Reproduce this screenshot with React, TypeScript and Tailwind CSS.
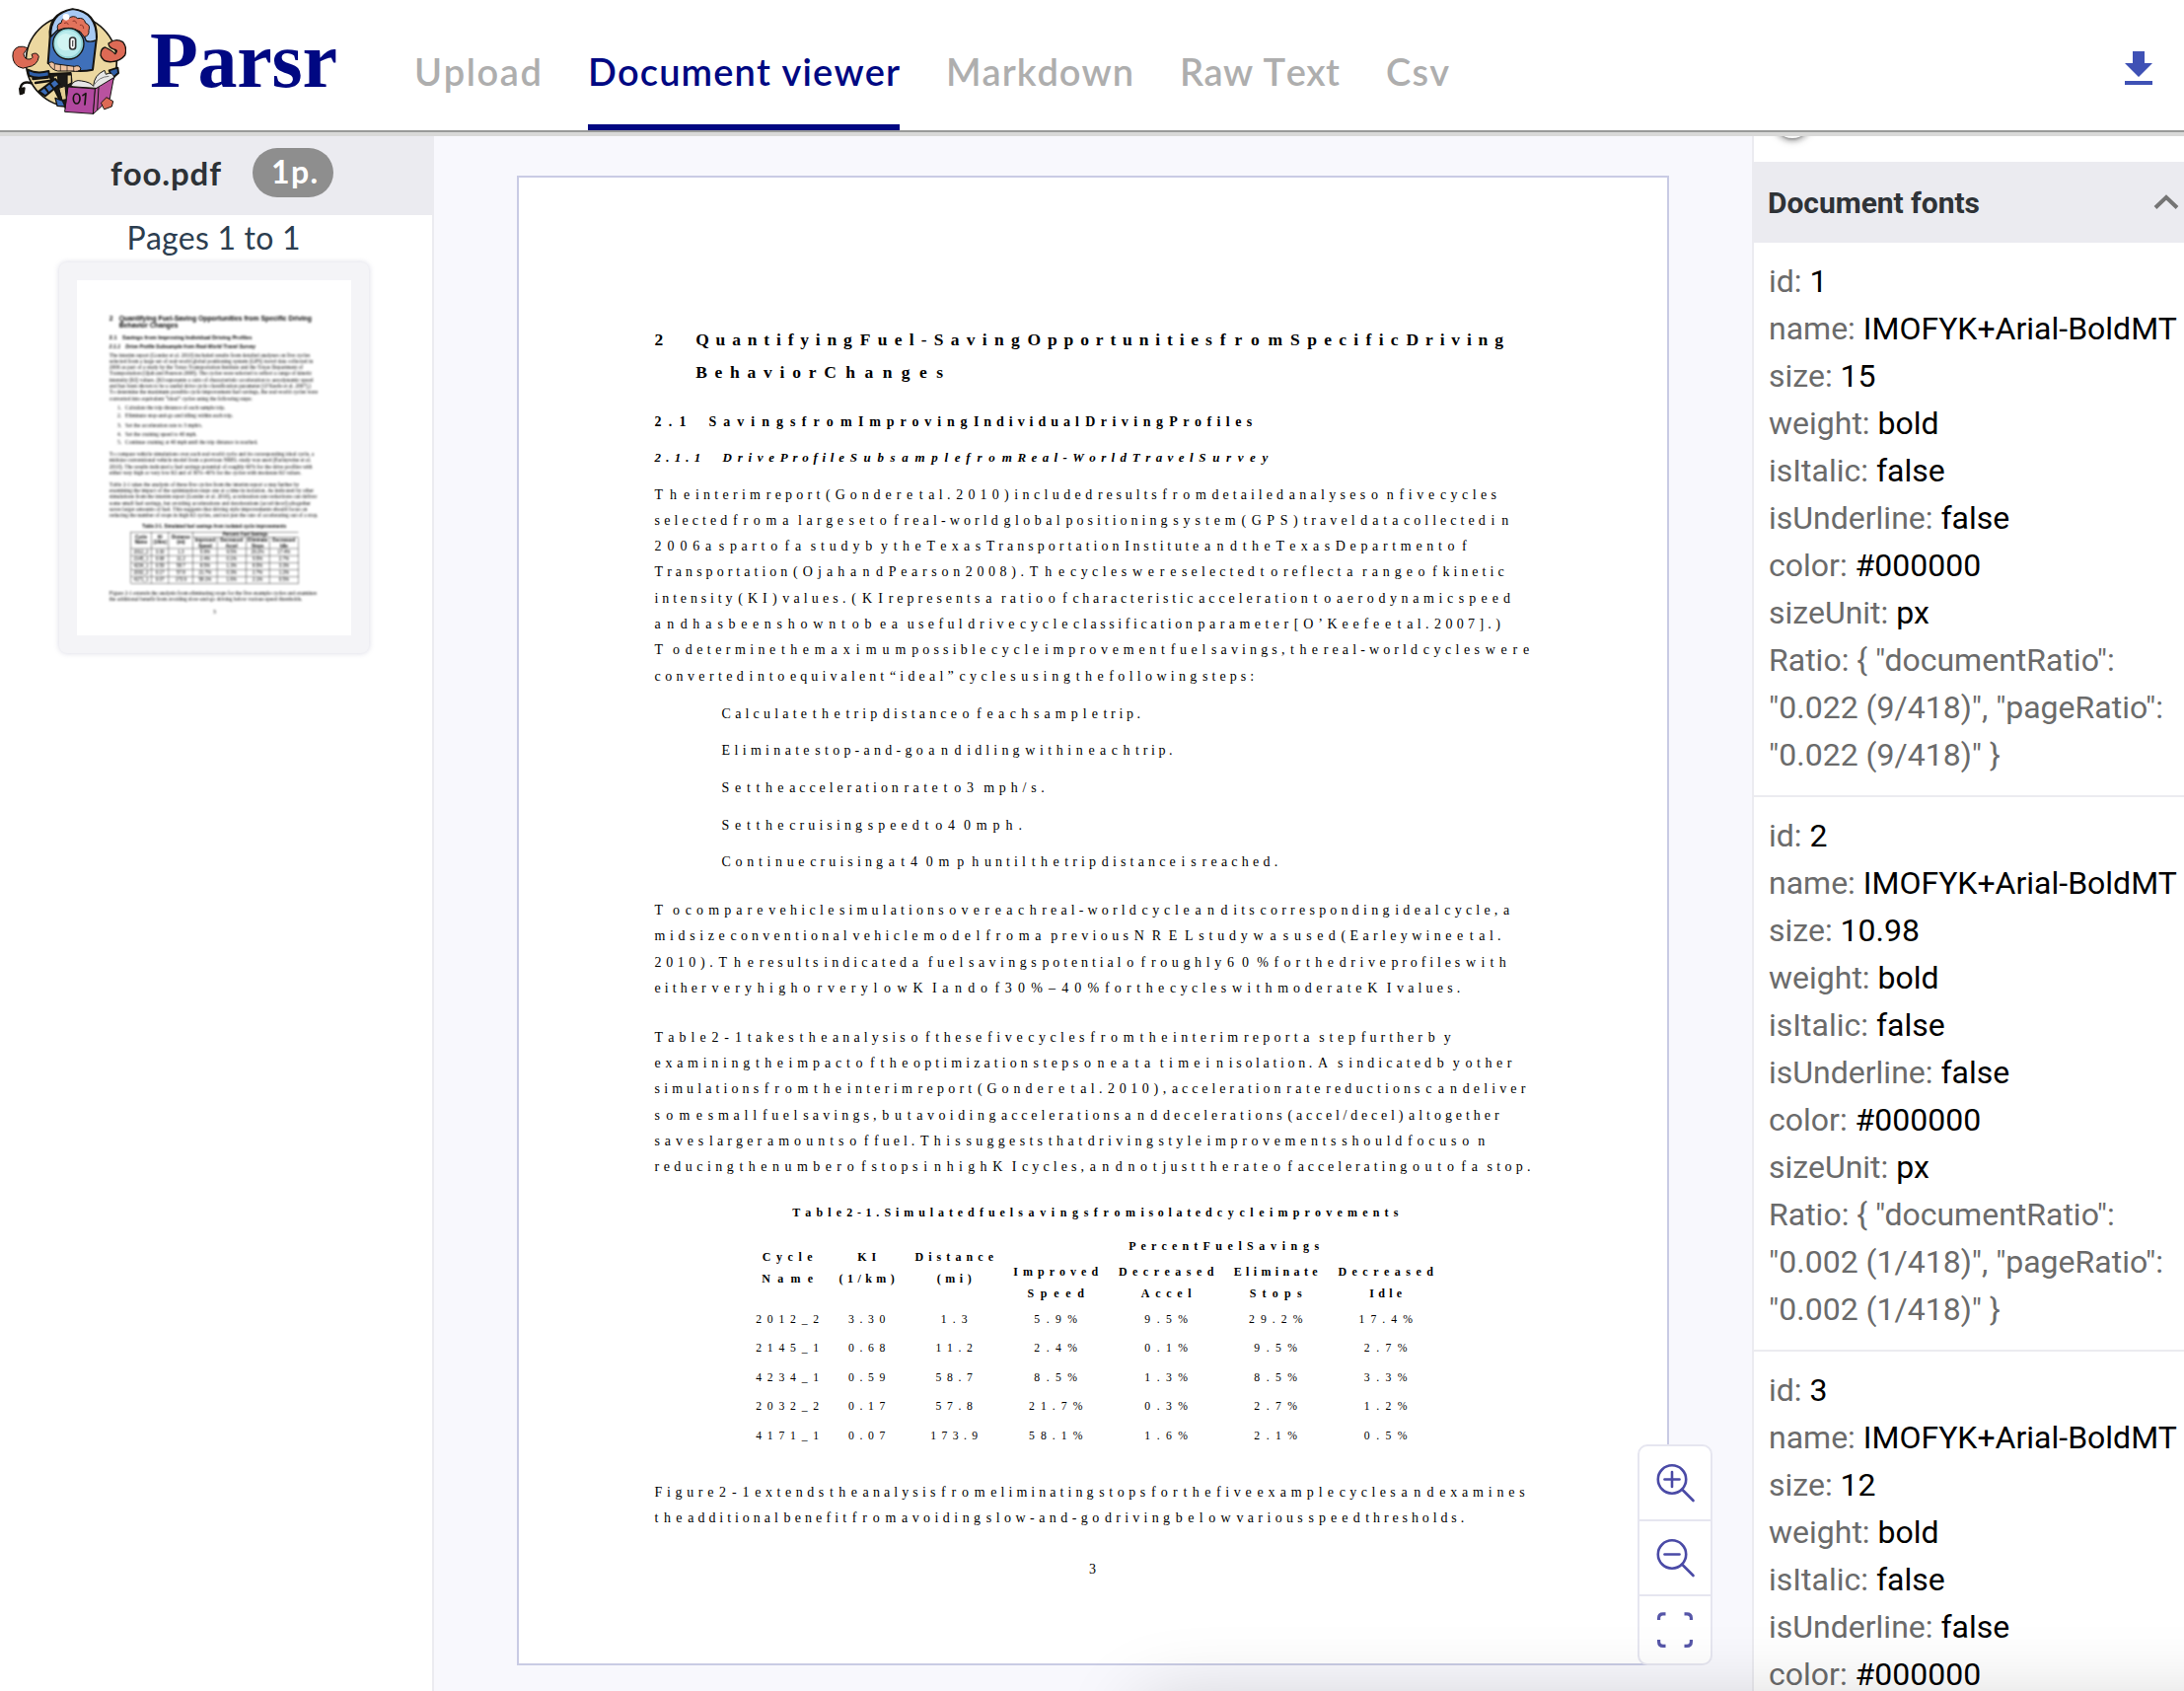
import React from "react";
import { clsx } from "clsx";

const SERIF = "'Liberation Serif'";
const SANS = "'Liberation Sans'";

const canvas = document.createElement("canvas");
const ctx = canvas.getContext("2d")!;
const cache = new Map<string, number>();

function measure(text: string, font: string): number {
  const key = font + "|" + text;
  const known = cache.get(key);
  if (known !== undefined) return known;
  ctx.font = font;
  ctx.fontKerning = "none";
  const w = ctx.measureText(text).width;
  cache.set(key, w);
  return w;
}

/* ---------- Text whose tracking is computed so that it fills a width ---------- */

function Fit({ text, width, font, className }: { text: string; width: number; font: string; className?: string }) {
  const spacing = (width - measure(text, font)) / Math.max(1, text.length - 1);
  return (
    <span
      className={clsx("inline-block whitespace-nowrap [font-kerning:none]", className)}
      style={{ width, letterSpacing: spacing }}
    >
      {text}
    </span>
  );
}

/* ---------- Document text ---------- */

type Kind = "h1" | "h2" | "h3" | "body" | "th" | "td";

const kinds: Record<Kind, { pre: string; size: number; source: string; shown: number; cls: string; plain: string }> = {
  h1: { pre: "bold ", size: 28.57, source: SANS, shown: 17.5, cls: "font-bold text-[17.5px]", plain: "font-bold text-[28.5px] font-['Liberation_Sans']" },
  h2: { pre: "bold ", size: 22.9, source: SANS, shown: 14, cls: "font-bold text-[14px]", plain: "font-bold text-[22.9px] font-['Liberation_Sans']" },
  h3: { pre: "italic bold ", size: 20.95, source: SANS, shown: 13, cls: "font-bold italic text-[13px]", plain: "font-bold italic text-[20.9px] font-['Liberation_Sans']" },
  body: { pre: "", size: 22.9, source: SERIF, shown: 14, cls: "text-[14px]", plain: "text-[22.85px]" },
  th: { pre: "bold ", size: 19.1, source: SANS, shown: 12, cls: "font-bold text-[12px]", plain: "font-bold text-[19px] font-['Liberation_Sans']" },
  td: { pre: "", size: 19.2, source: SANS, shown: 11.7, cls: "text-[11.7px]", plain: "text-[19px] font-['Liberation_Sans']" },
};

const Plain = React.createContext(false);

function Words({ kind, text, className }: { kind: Kind; text: string; className?: string }) {
  const plain = React.useContext(Plain);
  const k = kinds[kind];
  const source = `${k.pre}${k.size}px ${k.source}`;
  const shown = `${k.pre}${k.shown}px ${SERIF}`;
  if (plain) {
    return <div className={clsx("whitespace-nowrap [font-kerning:none]", k.plain, className)}>{text}</div>;
  }
  return (
    <div
      className={clsx("flex whitespace-nowrap [font-kerning:none]", k.cls, className)}
      style={{ columnGap: measure(" ", source) }}
    >
      {text.split(" ").map((word, i) => {
        const width = measure(word, source);
        const spacing = word.length > 1 ? (width - measure(word, shown)) / (word.length - 1) : 0;
        return (
          <span key={i} className="block shrink-0" style={{ width, letterSpacing: spacing }}>
            {word}
          </span>
        );
      })}
    </div>
  );
}

function Paragraph({ lines, className }: { lines: string[]; className: string }) {
  return (
    <div className={clsx("leading-[26.3px]", className)}>
      {lines.map((l) => (
        <Words key={l} kind="body" text={l} className="h-[26.3px]" />
      ))}
    </div>
  );
}

const p1 = [
  "The interim report (Gonder et al. 2010) included results from detailed analyses on five cycles",
  "selected from a large set of real-world global positioning system (GPS) travel data collected in",
  "2006 as part of a study by the Texas Transportation Institute and the Texas Department of",
  "Transportation (Ojah and Pearson 2008). The cycles were selected to reflect a range of kinetic",
  "intensity (KI) values. (KI represents a ratio of characteristic acceleration to aerodynamic speed",
  "and has been shown to be a useful drive cycle classification parameter [O’Keefe et al. 2007].)",
  "To determine the maximum possible cycle improvement fuel savings, the real-world cycles were",
  "converted into equivalent “ideal” cycles using the following steps:",
];
const steps = [
  "Calculate the trip distance of each sample trip.",
  "Eliminate stop-and-go and idling within each trip.",
  "Set the acceleration rate to 3 mph/s.",
  "Set the cruising speed to 40 mph.",
  "Continue cruising at 40 mph until the trip distance is reached.",
];
const p2 = [
  "To compare vehicle simulations over each real-world cycle and its corresponding ideal cycle, a",
  "midsize conventional vehicle model from a previous NREL study was used (Earleywine et al.",
  "2010). The results indicated a fuel savings potential of roughly 60% for the drive profiles with",
  "either very high or very low KI and of 30%–40% for the cycles with moderate KI values.",
];
const p3 = [
  "Table 2-1 takes the analysis of these five cycles from the interim report a step further by",
  "examining the impact of the optimization steps one at a time in isolation. As indicated by other",
  "simulations from the interim report (Gonder et al. 2010), acceleration rate reductions can deliver",
  "some small fuel savings, but avoiding accelerations and decelerations (accel/decel) altogether",
  "saves larger amounts of fuel. This suggests that driving style improvements should focus on",
  "reducing the number of stops in high KI cycles, and not just the rate of accelerating out of a stop.",
];
const p4 = [
  "Figure 2-1 extends the analysis from eliminating stops for the five example cycles and examines",
  "the additional benefit from avoiding slow-and-go driving below various speed thresholds.",
];
const rows = [
  ["2012_2", "3.30", "1.3", "5.9%", "9.5%", "29.2%", "17.4%"],
  ["2145_1", "0.68", "11.2", "2.4%", "0.1%", "9.5%", "2.7%"],
  ["4234_1", "0.59", "58.7", "8.5%", "1.3%", "8.5%", "3.3%"],
  ["2032_2", "0.17", "57.8", "21.7%", "0.3%", "2.7%", "1.2%"],
  ["4171_1", "0.07", "173.9", "58.1%", "1.6%", "2.1%", "0.5%"],
];

function DocumentTable() {
  const plain = React.useContext(Plain);
  const edge = plain ? "border-[#222]" : "border-transparent";
  const left = [["Cycle", "Name"], ["KI", "(1/km)"], ["Distance", "(mi)"]];
  const right = [["Improved", "Speed"], ["Decreased", "Accel"], ["Eliminate", "Stops"], ["Decreased", "Idle"]];
  return (
    <div className={clsx("ml-[90.6px] mt-[11.4px] w-[712px] border-t-2 border-l-2", edge)}>
      <div className="-mt-[2px] -ml-[1px] grid h-[70.6px] grid-cols-[88px_73px_104px_447px] leading-[22px]">
        {left.map(([a, b]) => (
          <div key={a} className={clsx("flex flex-col items-center border-r-2 border-b-2 pt-[10.6px]", edge)}>
            <Words kind="th" text={a} className="h-[22px]" />
            <Words kind="th" text={b} />
          </div>
        ))}
        <div className={clsx("flex flex-col border-b-2", edge)}>
          <Words kind="th" text="Percent Fuel Savings" className="mr-[6px] h-[22px] self-center" />
          <div className={clsx("grid grow grid-cols-[102px_122px_100px_123px] border-t-2 pt-[2px]", edge)}>
            {right.map(([a, b]) => (
              <div key={b} className={clsx("flex flex-col items-center border-r-2", edge)}>
                <Words kind="th" text={a} className="h-[22px]" />
                <Words kind="th" text={b} className="h-[22px]" />
              </div>
            ))}
          </div>
        </div>
      </div>
      {rows.map((r) => (
        <div key={r[0]} className="-ml-[1px] grid h-[29.5px] grid-cols-[88px_73px_104px_102px_122px_100px_123px] leading-[29.5px]">
          {r.map((c, i) => (
            <div key={i} className={clsx("flex justify-center border-r-2", plain && "border-b-2", edge)}>
              <Words kind="td" text={c} />
            </div>
          ))}
        </div>
      ))}
    </div>
  );
}

function DocumentPage() {
  const plain = React.useContext(Plain);
  return (
    <div
      className={clsx(
        "flex h-[1506px] w-[1164px] flex-col bg-white pl-[137.6px] font-['Liberation_Serif',serif] text-black",
        plain ? "pt-[144px]" : "pt-[148px]",
      )}
    >
      <div className="flex leading-[33px]">
        <Words kind="h1" text="2" className="w-[41.6px]" />
        <div>
          <Words kind="h1" text="Quantifying Fuel-Saving Opportunities from Specific Driving" className="h-[33px]" />
          <Words kind="h1" text="Behavior Changes" className="h-[33px]" />
        </div>
      </div>
      <div className="mt-[20.4px] flex h-[28px] leading-[28px]">
        <Words kind="h2" text="2.1" className="w-[55px]" />
        <Words kind="h2" text="Savings from Improving Individual Driving Profiles" />
      </div>
      <div className="mt-[8px] flex h-[28px] leading-[28px]">
        <Words kind="h3" text="2.1.1" className="w-[69px]" />
        <Words kind="h3" text="Drive Profile Subsample from Real-World Travel Survey" />
      </div>
      <Paragraph lines={p1} className="mt-[10.2px]" />
      <div className="mt-[5.6px] leading-[37.7px]">
        {steps.map((s, i) => (
          <div key={s} className="flex h-[37.7px] pl-[34px]">
            <div className="w-[34px]">{plain && <Words kind="body" text={`${i + 1}.`} />}</div>
            <Words kind="body" text={s} />
          </div>
        ))}
      </div>
      <Paragraph lines={p2} className="mt-[17.2px]" />
      <Paragraph lines={p3} className="mt-[23.3px]" />
      <Words kind="th" text="Table 2-1. Simulated fuel savings from isolated cycle improvements" className="mt-[20.4px] ml-[139.6px] h-[24px] leading-[24px]" />
      <DocumentTable />
      <Paragraph lines={p4} className="mt-[29.6px]" />
      <div className="mt-[25.3px] flex h-[26.3px] w-[892px] justify-center leading-[26.3px]">
        <Words kind="body" text="3" />
      </div>
    </div>
  );
}

/* ---------- Logo ---------- */

function Robot() {
  return (
    <svg viewBox="36 24 348 324" className="h-[108px] w-[116px] shrink-0" stroke="#15130f" strokeWidth="6" strokeLinejoin="round" strokeLinecap="round">
      <circle cx="217" cy="186" r="138" fill="#ecd8a0" strokeWidth="5" />
      <path d="M96 253 Q66 244 62 268 L66 284" fill="none" strokeWidth="7" />
      <path d="M60 270 l14 -2 -2 14 -10 4z" fill="#15130f" />
      <path d="M150 225 L215 222 L222 300 L205 335 L180 300 L160 260z" fill="#1b1a18" />
      <path d="M163 232 l12 -2 2 20 -10 6z M205 228 l12 0 0 24 -12 6z M180 268 l18 -6 4 40 -12 2z" fill="#e3cd92" strokeWidth="3" />
      <path d="M84 212 Q112 226 148 216 L150 232 Q112 242 88 230z" fill="#2f5fa8" />
      <path d="M100 240 L146 236 M108 252 L150 246" fill="none" strokeWidth="7" />
      <path d="M118 278 L168 240 L182 256 L138 292z" fill="#3b6cb8" />
      <path d="M136 266 l12 16 M152 254 l12 16" fill="none" />
      <path d="M168 298 l22 8 8 18 -24 -2z" fill="#3b6cb8" strokeWidth="4" />
      <path d="M332 214 l26 -8 2 16 -18 16z" fill="#2f5fa8" />
      <path d="M152 112 Q146 42 220 28 Q294 36 294 112 L282 212 Q220 226 146 192z" fill="#3f70ba" />
      <path d="M155 112 Q152 40 222 28 Q296 38 293 122 Q276 130 262 124 L250 96 L174 92z" fill="#a7c9f3" strokeWidth="4" />
      <path d="M176 92 Q170 72 186 70 Q188 52 208 56 Q224 44 236 56 Q256 52 260 70 Q276 76 270 92 Q272 110 256 112 L244 96 Q210 76 176 92z" fill="#e2735c" strokeWidth="3" />
      <path d="M196 70 q8 -6 12 4 M222 64 q8 -4 10 6 M244 76 q10 -2 10 10" fill="none" stroke="#8d3427" strokeWidth="3" />
      <circle cx="201" cy="52" r="10" fill="#fff" stroke="none" />
      <circle cx="208" cy="133" r="47" fill="#8fd0d4" strokeWidth="4" />
      <circle cx="207" cy="132" r="40" fill="#b9ebec" stroke="none" />
      <circle cx="200" cy="128" r="26" fill="#d2f5f3" stroke="none" />
      <rect x="212" y="114" width="18" height="36" rx="8" fill="#fff" stroke="#333" strokeWidth="5" />
      <path d="M221 124 v16" stroke="#555" strokeWidth="4" />
      <path d="M148 192 Q158 184 166 194 L226 202 Q242 196 246 210 Q238 220 222 216 L176 216 Q154 212 148 192z" fill="#f0c3a1" strokeWidth="3" />
      <path d="M166 196 v14 M184 199 v16 M204 201 v15 M224 202 v14" strokeWidth="2" />
      <path d="M84 146 Q52 132 40 158 Q34 186 54 202 Q70 212 84 204 Q114 200 118 172 Q112 156 96 166 Q104 178 90 180 Q74 182 72 164 Q76 156 84 146z" fill="#dc6a55" strokeWidth="3" />
      <path d="M330 132 Q352 114 374 128 Q388 146 380 168 Q366 186 340 188 Q312 190 306 168 Q306 146 320 144 Q342 154 350 164 Q362 152 346 150 Q330 144 330 132z" fill="#dc6a55" strokeWidth="4" />
      <path d="M215 262 Q225 240 248 246 Q276 250 284 262 Q286 228 318 214 L322 226 Q342 216 348 236 L300 268z" fill="#e6e6e6" strokeWidth="3" />
      <path d="M286 258 Q300 234 330 232" fill="none" stroke="#777" strokeWidth="3" />
      <path d="M208 264 L290 270 L284 346 L198 340z" fill="#b1489f" strokeWidth="3" />
      <path d="M290 270 L346 236 L334 300 L284 346z" fill="#b9529f" strokeWidth="3" />
      <path d="M300 266 L296 334" fill="none" strokeWidth="3" />
      <ellipse cx="233" cy="300" rx="10" ry="15" fill="none" strokeWidth="5" />
      <path d="M252 290 l9 -6 -3 34" fill="none" strokeWidth="5" />
      <path d="M308 312 L324 296 L344 308 L340 324 L318 332z" fill="#dc6a55" strokeWidth="3" />
    </svg>
  );
}

/* ---------- Header ---------- */

const tabs = [
  { label: "Upload", width: 129, gap: "ml-0" },
  { label: "Document viewer", width: 316, active: true, gap: "ml-[47px]" },
  { label: "Markdown", width: 190, gap: "ml-[47px]" },
  { label: "Raw Text", width: 162, gap: "ml-[47px]" },
  { label: "Csv", width: 64, gap: "ml-[47px]" },
];

function Header() {
  return (
    <header className="flex h-[138px] shrink-0 border-b-4 border-[#d9d9d8] bg-white">
      <div className="flex h-[134px] w-full border-b-2 border-[#999a99]">
        <div className="flex w-[420px] pt-2 pl-3">
          <Robot />
          <div className="mt-[7px] ml-[24px] h-[92px] font-['Liberation_Serif',serif] text-[80px] leading-[92px] font-bold text-[#000882]">
            <Fit text="Parsr" width={190} font="bold 80px 'Liberation Serif'" />
          </div>
        </div>
        <nav className="flex font-['Lato',sans-serif] text-[38px] leading-[44px] font-semibold">
          {tabs.map((t) => (
            <div
              key={t.label}
              className={clsx(
                "h-[132px] border-b-[6px] pt-[50px]",
                t.gap,
                t.active ? "border-[#000882] text-[#000882]" : "border-transparent text-[#aeaeae]",
              )}
            >
              <Fit text={t.label} width={t.width} font="600 38px Lato" />
            </div>
          ))}
        </nav>
        <div className="ml-auto pt-[46px] pr-[22px]">
          <svg viewBox="0 0 24 24" className="size-12" fill="#3f51b5">
            <path d="M19 9h-4V3H9v6H5l7 7 7-7zM5 18v2h14v-2H5z" />
          </svg>
        </div>
      </div>
    </header>
  );
}

/* ---------- Left column ---------- */

function Sidebar() {
  return (
    <aside className="flex w-[440px] shrink-0 flex-col border-r-2 border-[#ebebf0] bg-white font-['Lato',sans-serif]">
      <div className="flex h-[80px] shrink-0 bg-[#ebebf0] pl-[112px]">
        <div className="mt-[17px] text-[33px] leading-[40px] font-bold text-[#2d3236]">
          <Fit text="foo.pdf" width={112} font="bold 33px Lato" />
        </div>
        <div className="mt-[12px] ml-[32px] h-[50px] w-[82px] rounded-full bg-[#8e8e8e] pl-[19px] text-[32px] leading-[47px] font-bold text-white">
          <Fit text="1p." width={47} font="bold 32px Lato" />
        </div>
      </div>
      <div className="h-[48px] shrink-0 pt-[4px] pl-[128.5px] text-[32px] leading-[38px] text-[#2c3e50]">
        <Fit text="Pages 1 to 1" width={176} font="32px Lato" />
      </div>
      <div className="ml-[60px] h-[396px] w-[314px] rounded-[8px] bg-[#f4f4f7] p-[18px] shadow-[0_0_5px_1px_rgba(120,120,160,0.22)]">
        <div className="h-[360px] w-[278px] overflow-hidden bg-white">
          <div className="h-[1506px] w-[1164px] origin-top-left scale-[0.2388] blur-[4px]">
            <Plain.Provider value={true}>
              <DocumentPage />
            </Plain.Provider>
          </div>
        </div>
      </div>
    </aside>
  );
}

/* ---------- Right column ---------- */

const fonts = [
  { id: "1", size: "15", ratio: "0.022 (9/418)" },
  { id: "2", size: "10.98", ratio: "0.002 (1/418)" },
  { id: "3", size: "12", ratio: "0.002 (1/418)" },
];

function FontsPanel() {
  return (
    <aside className="flex w-[438px] shrink-0 flex-col overflow-hidden border-l-2 border-[#ebebf0] bg-white font-['Roboto',sans-serif]">
      <div className="h-[26px] shrink-0 overflow-hidden pl-[19px]">
        <div className="-mt-[38px] size-10 rounded-full bg-[#fafafa] shadow-[0_6px_2px_-4px_rgba(0,0,0,0.2),0_4px_4px_rgba(0,0,0,0.14),0_2px_10px_rgba(0,0,0,0.2)]" />
      </div>
      <div className="flex h-[82px] shrink-0 items-center justify-between bg-[#ebebf0] pr-[5px] pl-[14px] text-[30px] font-bold text-[#2f3337]">
        <Fit text="Document fonts" width={215} font="bold 30px Roboto" />
        <svg viewBox="0 0 26 16" className="h-[16px] w-[26px]" fill="none" stroke="#757575" strokeWidth="4">
          <path d="M2 13.5 L13 3 L24 13.5" />
        </svg>
      </div>
      {fonts.map((f) => (
        <div key={f.id} className="h-[562px] shrink-0 border-b-2 border-[#ebebf0] pt-[15px] pl-[15px] text-[32px] leading-[48px] text-[#6b6b6b]">
          {[
            ["id", f.id],
            ["name", "IMOFYK+Arial-BoldMT"],
            ["size", f.size],
            ["weight", "bold"],
            ["isItalic", "false"],
            ["isUnderline", "false"],
            ["color", "#000000"],
            ["sizeUnit", "px"],
          ]
            .slice(0, f.id === "3" ? 7 : 8)
            .map(([k, v]) => (
              <div key={k} className="whitespace-nowrap">
                {k}: <span className="text-black">{v}</span>
              </div>
            ))}
          {f.id !== "3" && (
            <>
              <div className="whitespace-nowrap">Ratio: {'{ "documentRatio":'}</div>
              <div className="whitespace-nowrap">{`"${f.ratio}", "pageRatio":`}</div>
              <div className="whitespace-nowrap">{`"${f.ratio}" }`}</div>
            </>
          )}
        </div>
      ))}
    </aside>
  );
}

/* ---------- Zoom controls ---------- */

function ZoomControls() {
  return (
    <div className="absolute top-[1326px] left-[1220px] flex h-[224px] w-[76px] flex-col divide-y-2 divide-[#e6e6f0] rounded-[10px] border-2 border-[#e6e6f0] bg-white">
      {[true, false].map((plus) => (
        <div key={String(plus)} className="flex h-[76px] shrink-0 pt-[16px] pl-[16px]">
          <svg viewBox="0 0 42 42" className="size-[42px]" fill="none" stroke="#4a4aa6" strokeWidth="2.6" strokeLinecap="round">
            <circle cx="17" cy="17.5" r="14.2" />
            <path d="M27.5 28 L38.5 39" />
            <path d="M9.5 17.5 H24.5" />
            {plus && <path d="M17 10 V25" />}
          </svg>
        </div>
      ))}
      <div className="flex grow pt-[15px] pl-[17px]">
        <svg viewBox="0 0 38 38" className="size-[38px]" fill="none" stroke="#5656a8" strokeWidth="3.2">
          <path d="M2.6 9 V7 Q2.6 2.8 7 2.8 H9.5" />
          <path d="M28.5 2.8 H31 Q35.4 2.8 35.4 7 V9" />
          <path d="M2.6 29 V31 Q2.6 35.4 7 35.4 H9.5" />
          <path d="M28.5 35.4 H31 Q35.4 35.4 35.4 31 V29" />
        </svg>
      </div>
    </div>
  );
}

export default function App() {
  return (
    <div className="relative flex h-[1714px] w-[2214px] flex-col overflow-hidden bg-white">
      <Header />
      <div className="flex h-[1576px]">
        <Sidebar />
        <main className="relative w-[1336px] shrink-0 bg-[#f8f8fd] pt-[40px] pl-[84px]">
          <div className="h-[1510px] w-[1168px] border-2 border-[#c9cbe4]">
            <DocumentPage />
          </div>
          <ZoomControls />
        </main>
        <FontsPanel />
      </div>
      <div className="pointer-events-none absolute top-[1726px] left-[1155px] h-[200px] w-[1300px] rounded-[20px] shadow-[0_0_80px_rgba(0,0,0,0.18)]" />
    </div>
  );
}
